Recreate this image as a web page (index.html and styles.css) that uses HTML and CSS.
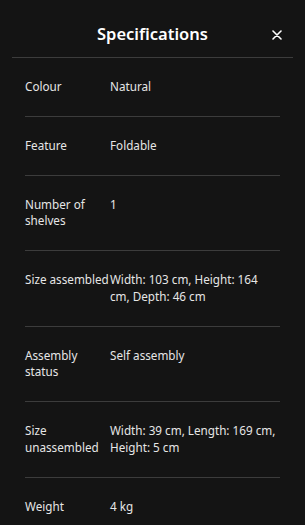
FILE: index.html
```html
<!DOCTYPE html>
<html lang="en">
<head>
    <meta charset="UTF-8">
    <meta name="viewport" content="width=device-width, initial-scale=1.0">
    <title>Specifications</title>
    <link rel="stylesheet" href="styles.css">
</head>
<body>
    <div class="spec-sheet">
        <div class="spec-header">
            <h1>Specifications</h1>
            <button class="close-btn" aria-label="Close">
                <svg width="10" height="10" viewBox="0 0 10 10">
                    <path d="M1 1 L9 9 M9 1 L1 9" stroke="#fff" stroke-width="1.6" stroke-linecap="round"/>
                </svg>
            </button>
        </div>
        <div class="spec-list">
            <div class="spec-row">
                <div class="spec-label">Colour</div>
                <div class="spec-value">Natural</div>
            </div>
            <div class="spec-row">
                <div class="spec-label">Feature</div>
                <div class="spec-value">Foldable</div>
            </div>
            <div class="spec-row">
                <div class="spec-label">Number of shelves</div>
                <div class="spec-value">1</div>
            </div>
            <div class="spec-row">
                <div class="spec-label">Size assembled</div>
                <div class="spec-value">Width: 103 cm, Height: 164 cm, Depth: 46 cm</div>
            </div>
            <div class="spec-row">
                <div class="spec-label">Assembly status</div>
                <div class="spec-value">Self assembly</div>
            </div>
            <div class="spec-row">
                <div class="spec-label">Size unassembled</div>
                <div class="spec-value">Width: 39 cm, Length: 169 cm, Height: 5 cm</div>
            </div>
            <div class="spec-row">
                <div class="spec-label">Weight</div>
                <div class="spec-value">4 kg</div>
            </div>
        </div>
    </div>
</body>
</html>
```

FILE: styles.css
```css
body {
    margin: 0;
    padding: 0;
    background-color: #141414;
    color: #e6e6e6;
    font-family: "Noto Sans", sans-serif;
}
.spec-sheet {
    min-height: 100vh;
}
.spec-header {
    position: relative;
    margin: 0 12px;
    padding: 22px 0 11px;
    border-bottom: 1px solid #3c3c3c;
    text-align: center;
}
.spec-header h1 {
    margin: 0;
    font-size: 16.5px;
    line-height: 24px;
    font-weight: 600;
    color: #fff;
}
.close-btn {
    position: absolute;
    right: 10px;
    top: 29px;
    width: 12px;
    height: 12px;
    padding: 0;
    border: none;
    background: none;
    cursor: pointer;
    display: flex;
    align-items: center;
    justify-content: center;
}
.spec-list {
    padding: 0 25px;
}
.spec-row {
    display: grid;
    grid-template-columns: 85px 1fr;
    padding: 20px 0 21px;
    border-bottom: 1px solid #3c3c3c;
    font-size: 11.7px;
    line-height: 16.75px;
}
.spec-row:last-child {
    border-bottom: none;
}
```
